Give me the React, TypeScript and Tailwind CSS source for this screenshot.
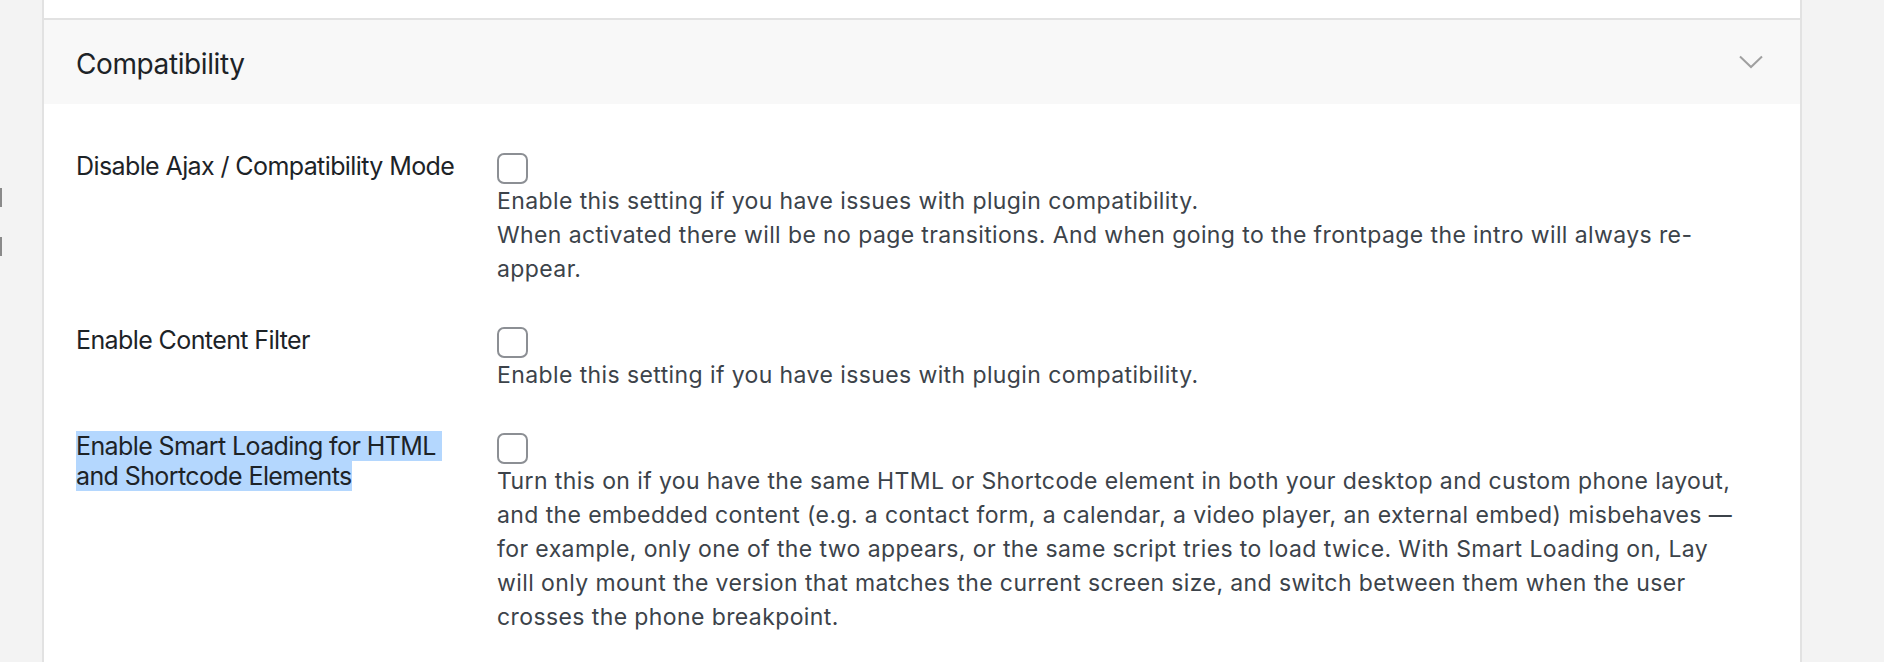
import React from 'react';

type Setting = {
  label: string[];
  selected?: boolean;
  lines: string[];
};

const settings: Setting[] = [
  {
    label: ['Disable Ajax / Compatibility Mode'],
    lines: [
      'Enable this setting if you have issues with plugin compatibility.',
      'When activated there will be no page transitions. And when going to the frontpage the intro will always re-',
      'appear.',
    ],
  },
  {
    label: ['Enable Content Filter'],
    lines: ['Enable this setting if you have issues with plugin compatibility.'],
  },
  {
    label: ['Enable Smart Loading for HTML ', 'and Shortcode Elements'],
    selected: true,
    lines: [
      'Turn this on if you have the same HTML or Shortcode element in both your desktop and custom phone layout,',
      'and the embedded content (e.g. a contact form, a calendar, a video player, an external embed) misbehaves —',
      'for example, only one of the two appears, or the same script tries to load twice. With Smart Loading on, Lay',
      'will only mount the version that matches the current screen size, and switch between them when the user',
      'crosses the phone breakpoint.',
    ],
  },
];

const Checkbox = () => (
  <div className="mt-[4px] h-[31px] w-[31px] rounded-[7px] border-2 border-[#8c8f94] bg-white" />
);

const SettingRow = ({ s }: { s: Setting }) => (
  <div className="flex items-start">
    <div className="w-[421px] shrink-0 pt-[2px] text-[25px] leading-[30px] tracking-[-0.6px] text-[#1d2327]">
      {s.label.map((l, i) => (
        <div
          key={i}
          className={
            s.selected
              ? 'w-fit whitespace-pre bg-[#b4d7fe]'
              : 'w-fit whitespace-pre'
          }
        >
          {l}
        </div>
      ))}
    </div>
    <div className="flex flex-col">
      <Checkbox />
      <div className="text-[23px] leading-[34px] tracking-[0.4px] text-[#3c434a]">
        {s.lines.map((l, i) => (
          <div key={i} className="whitespace-nowrap">
            {l}
          </div>
        ))}
      </div>
    </div>
  </div>
);

export default function App() {
  return (
    <div
      className="flex h-[662px] w-full overflow-hidden bg-[#f3f3f3]"
      style={{ fontFamily: 'Inter, "Liberation Sans", sans-serif' }}
    >
      {/* left strip with scroll marks */}
      <div className="flex w-[42px] shrink-0 flex-col">
        <div className="mt-[188px] h-[19px] w-[2px] bg-[#8a8a8a]" />
        <div className="mt-[30px] h-[19px] w-[2px] bg-[#8a8a8a]" />
      </div>

      <div className="flex w-[1760px] shrink-0 flex-col border-x-2 border-[#e2e2e2] bg-white">
        <div className="h-[18px]" />
        <div className="flex h-[86px] items-center justify-between border-t-2 border-[#e2e2e2] bg-[#f8f8f8] pl-[32px] pr-[37px]">
          <h2 className="pt-[4px] text-[28px] font-normal tracking-[-0.4px] text-[#1d2327]">Compatibility</h2>
          <svg width="24" height="14" viewBox="0 0 24 14" fill="none" className="mt-[-1px]">
            <polyline points="1,1.5 12,12 23,1.5" stroke="#a0a0a0" strokeWidth="2" />
          </svg>
        </div>

        <div className="flex flex-col gap-[37px] pl-[32px] pt-[45px]">
          {settings.map((s, i) => (
            <SettingRow key={i} s={s} />
          ))}
        </div>
      </div>
    </div>
  );
}
